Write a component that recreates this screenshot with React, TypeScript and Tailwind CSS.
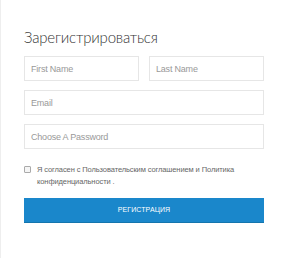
export default function App() {
  const field =
    "h-[25px] border border-[#e6e6e6] px-[6px] text-[9px] tracking-[-0.2px] text-[#555] placeholder:text-[#999] outline-none";
  return (
    <div className="w-[300px] h-[258px] bg-white border-l border-[#eeeeee] font-['Liberation_Sans',Arial,sans-serif]">
      <div className="pl-[23px] pr-[36px] pt-[27px]">
        <h2 className="font-['Lato','Liberation_Sans',sans-serif] text-[15px] leading-[20px] text-[#333333] font-light tracking-[-0.2px]">Зарегистрироваться</h2>
        <form className="mt-[9px] flex flex-col">
          <div className="grid grid-cols-2 gap-[10px]">
            <input placeholder="First Name" className={field} />
            <input placeholder="Last Name" className={field} />
          </div>
          <input placeholder="Email" className={`mt-[9px] ${field}`} />
          <input placeholder="Choose A Password" className={`mt-[9px] ${field}`} />
          <label className="mt-[15px] flex items-start gap-[6px] text-[7.5px] leading-[12px] tracking-[-0.1px] text-[#666]">
            <input type="checkbox" className="mt-[2px] w-[7px] h-[7px] shrink-0 appearance-none border border-[#aaa] bg-[#f5f5f5] rounded-[1px]" />
            <span>
              Я согласен с <a className="text-[#666]">Пользовательским соглашением</a> и{" "}
              <a className="text-[#666]">Политика</a> <a className="text-[#666]">конфиденциальности</a> .
            </span>
          </label>
          <button
            type="button"
            className="mt-[10px] h-[25px] bg-[#1a87cb] border-b border-[#1475ad] text-white text-[7px] tracking-[0.1px]"
          >
            РЕГИСТРАЦИЯ
          </button>
        </form>
      </div>
    </div>
  );
}
